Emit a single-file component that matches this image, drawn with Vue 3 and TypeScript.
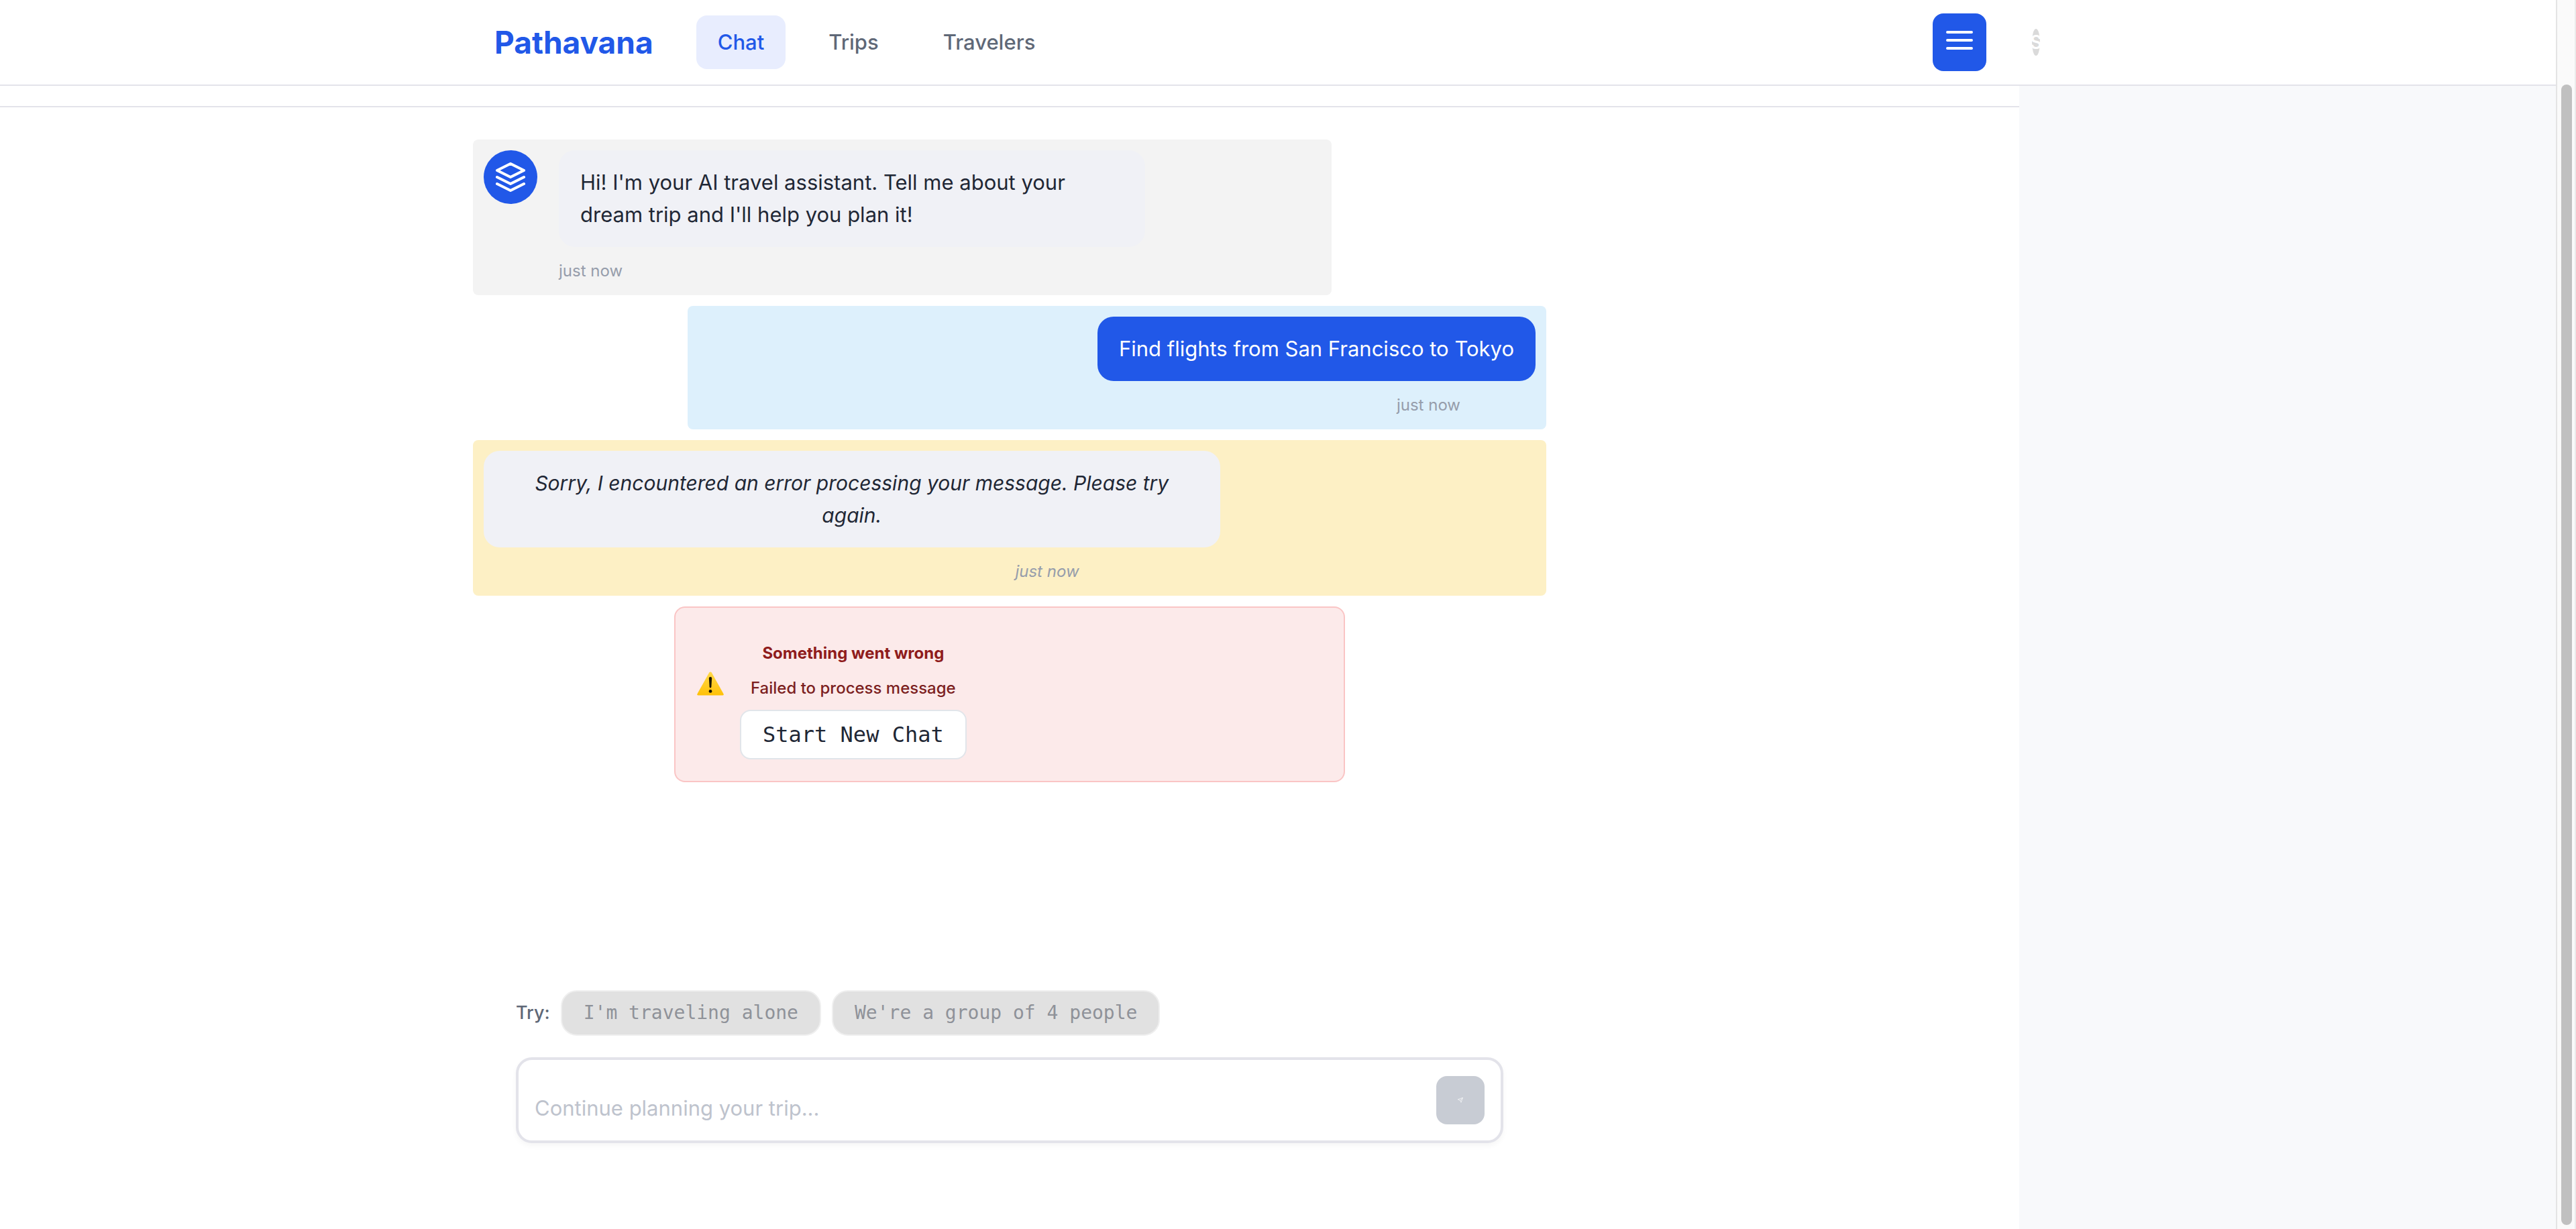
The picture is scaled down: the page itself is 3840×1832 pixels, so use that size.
<script setup lang="ts">
import { ref } from 'vue'

interface NavItem {
  label: string
  active: boolean
}

interface Message {
  id: number
  role: 'assistant' | 'user' | 'system'
  text: string
  time: string
}

const navItems: NavItem[] = [
  { label: 'Chat', active: true },
  { label: 'Trips', active: false },
  { label: 'Travelers', active: false },
]

const messages: Message[] = [
  {
    id: 1,
    role: 'assistant',
    text: "Hi! I'm your AI travel assistant. Tell me about your\ndream trip and I'll help you plan it!",
    time: 'just now',
  },
  { id: 2, role: 'user', text: 'Find flights from San Francisco to Tokyo', time: 'just now' },
  {
    id: 3,
    role: 'system',
    text: 'Sorry, I encountered an error processing your message. Please try\nagain.',
    time: 'just now',
  },
]

const suggestions: string[] = ["I'm traveling alone", "We're a group of 4 people"]
const draft = ref('')
</script>

<template>
  <div class="window">
    <div class="page">
      <header class="topbar">
        <div class="topbar-inner">
          <a class="brand" href="#">Pathavana</a>
          <nav class="nav">
            <a
              v-for="item in navItems"
              :key="item.label"
              href="#"
              class="nav-link"
              :class="{ active: item.active }"
            >{{ item.label }}</a>
          </nav>
          <button class="menu-button" type="button" aria-label="Toggle sidebar">
            <svg viewBox="0 0 24 24" class="icon">
              <path d="M3 6h18M3 12h18M3 18h18" />
            </svg>
          </button>
          <button class="profile" type="button" aria-label="Profile">
            <span class="profile-initial">S</span>
          </button>
        </div>
      </header>

      <div class="body">
        <main class="chat">
          <div class="chat-strip"></div>

          <section class="messages">
            <article v-for="m in messages" :key="m.id" class="message" :class="m.role">
              <div class="message-row">
                <span v-if="m.role === 'assistant'" class="bot">
                  <svg viewBox="0 0 24 24" class="icon">
                    <path d="M12 2 2 7l10 5 10-5-10-5zM2 17l10 5 10-5M2 12l10 5 10-5" />
                  </svg>
                </span>
                <p class="bubble">{{ m.text }}</p>
              </div>
              <time class="time">{{ m.time }}</time>
            </article>

            <div class="error" role="alert">
              <svg class="warning" viewBox="0 0 40 36" aria-hidden="true">
                <defs>
                  <linearGradient id="warn-fill" x1="0" y1="0" x2="0" y2="1">
                    <stop offset="0" stop-color="#ffd84a" />
                    <stop offset="1" stop-color="#ffc107" />
                  </linearGradient>
                </defs>
                <path
                  d="M18.2 1.6Q20-.6 21.8 1.6L39.4 33Q40.4 35.4 38 35.6H2Q-.4 35.4.6 33z"
                  fill="url(#warn-fill)"
                />
                <path d="M17.8 10q0-2 2.2-2t2.2 2l-.8 13q-.2 1.400-1.400 1.400t-1.400-1.400z" fill="#1b1500" />
                <circle cx="20" cy="29.400" r="2.400" fill="#1b1500" />
              </svg>
              <div class="error-body">
                <h4 class="error-title">Something went wrong</h4>
                <p class="error-text">Failed to process message</p>
                <button class="restart" type="button">Start New Chat</button>
              </div>
            </div>
          </section>

          <form class="composer" @submit.prevent>
            <div class="suggestions">
              <span class="try">Try:</span>
              <button v-for="s in suggestions" :key="s" class="chip" type="button" disabled>{{ s }}</button>
            </div>
            <div class="input-box">
              <textarea
                v-model="draft"
                class="input"
                rows="1"
                aria-label="Message"
                placeholder="Continue planning your trip..."
              ></textarea>
              <button class="send" type="submit" aria-label="Send" disabled>
                <svg viewBox="0 0 24 24" class="icon">
                  <path d="M22 2 11 13M22 2l-7 20-4-9-9-4z" />
                </svg>
              </button>
            </div>
          </form>
        </main>
        <aside class="sidebar"></aside>
      </div>
    </div>
    <div class="scrollbar" aria-hidden="true">
      <div class="thumb"></div>
    </div>
  </div>
</template>

<style>
body {
  margin: 0;
  background: #fff;
}
</style>

<style scoped>
.window {
  display: flex;
  min-height: 100vh;
  font-family: Inter, "Liberation Sans", sans-serif;
  font-size: 31px;
  line-height: 48px;
  color: #1f2735;
}

.window *,
.window *::before {
  box-sizing: border-box;
}

.page {
  flex: 1;
  min-width: 0;
  display: flex;
  flex-direction: column;
}

.icon {
  display: block;
  width: 48px;
  height: 48px;
  fill: none;
  stroke: #fff;
  stroke-width: 2;
  stroke-linecap: round;
  stroke-linejoin: round;
}

button {
  margin: 0;
  border: 0;
  font: inherit;
}

.topbar {
  height: 128px;
  border-bottom: 2px solid #e3e3ea;
}

.topbar-inner {
  max-width: 2400px;
  height: 100%;
  margin: 0 auto;
  padding: 0 32px;
  display: flex;
  align-items: center;
}

.brand {
  font-size: 46px;
  font-weight: 700;
  color: #2158e8;
  text-decoration: none;
}

.nav {
  display: flex;
  gap: 32px;
  margin-left: 64px;
}

.nav-link {
  padding: 16px 32px;
  border-radius: 16px;
  font-weight: 500;
  color: #5f6877;
  text-decoration: none;
}

.nav-link.active {
  background: #e8edfe;
  color: #2158e8;
}

.menu-button {
  height: 86px;
  margin-left: auto;
  padding: 16px 16px 22px;
  border-radius: 16px;
  background: #2158e8;
}

.profile {
  margin-left: 36px;
  padding: 0 32px;
  background: none;
}

.profile-initial {
  display: flex;
  align-items: center;
  justify-content: center;
  width: 12px;
  height: 40px;
  border-radius: 50%;
  background: #dadada;
  color: #fff;
  font-size: 28px;
  font-weight: 600;
}

.body {
  flex: 1;
  display: flex;
}

.chat {
  flex: 1;
  min-width: 0;
  display: flex;
  flex-direction: column;
}

.sidebar {
  width: 800px;
  background: #f8f9fb;
}

.chat-strip {
  height: 32px;
  border-bottom: 2px solid #e3e3ea;
}

.messages {
  flex: 1;
  width: 100%;
  max-width: 1600px;
  margin: 0 auto;
  padding: 48px 0;
  display: flex;
  flex-direction: column;
  gap: 16px;
}

.message {
  padding: 16px;
  border-radius: 8px;
}

.message-row {
  display: flex;
  gap: 32px;
}

.bubble {
  max-width: 70%;
  margin: 0;
  padding: 24px 32px;
  border-radius: 24px;
  background: #f0f1f6;
  white-space: pre-line;
}

.time {
  display: block;
  margin: 16px 112px 0;
  font-size: 24px;
  line-height: 40px;
  color: #969dab;
}

.assistant {
  width: 80%;
  background: #f3f3f3;
}

.assistant .bubble,
.system .bubble {
  width: 70%;
}

.bot {
  flex: none;
  width: 80px;
  height: 80px;
  padding: 16px;
  border-radius: 50%;
  background: #2158e8;
}

.user {
  width: 80%;
  align-self: flex-end;
  background: #ddf0fc;
}

.user .message-row {
  justify-content: flex-end;
}

.user .bubble {
  background: #2158e8;
  color: #fff;
}

.user .time {
  text-align: right;
}

.system {
  background: #fdf0c5;
  font-style: italic;
  text-align: center;
}

.system .bubble {
  font-size: 30px;
}

.system .time {
  margin-right: 0;
}

.error {
  width: 1000px;
  max-width: 100%;
  align-self: center;
  display: flex;
  align-items: center;
  gap: 24px;
  padding: 32px;
  border: 2px solid #fac5c5;
  border-radius: 16px;
  background: #fceaea;
  font-size: 24px;
}

.warning {
  flex: none;
  width: 40px;
  height: 36px;
  margin-bottom: 32px;
}

.error-body {
  text-align: center;
}

.error-title {
  margin: 12px 0 4px;
  font-size: 24px;
  font-weight: 700;
  color: #8f1c1c;
}

.error-text {
  margin: 0 0 8px;
  font-weight: 500;
  color: #7c1f1f;
}

.restart {
  display: block;
  padding: 11px 32px;
  border: 2px solid #e1e5ea;
  border-radius: 16px;
  background: #fff;
  color: #1f2735;
  font-family: "DejaVu Sans Mono", monospace;
  font-size: 32px;
  line-height: 48px;
}

.composer {
  width: 100%;
  max-width: 1600px;
  margin: 0 auto;
  padding: 0 64px 128px;
}

.suggestions {
  display: flex;
  align-items: center;
  gap: 16px;
  margin-bottom: 32px;
}

.try {
  font-size: 27px;
  font-weight: 500;
  color: #5f6877;
}

.chip {
  padding: 12px 32px;
  border: 2px solid #efefef;
  border-radius: 24px;
  background: #e1e1e1;
  color: #8f9299;
  font-family: "DejaVu Sans Mono", monospace;
  font-size: 28px;
  line-height: 40px;
}

.input-box {
  display: flex;
  align-items: flex-start;
  gap: 24px;
  padding: 24px;
  border: 4px solid #e3e3ea;
  border-radius: 24px;
  background: #fff;
  box-shadow: 0 4px 8px rgba(0, 0, 0, 0.04);
}

.input {
  flex: 1;
  height: 72px;
  padding: 24px 0 0;
  border: 0;
  outline: 0;
  resize: none;
  overflow: hidden;
  background: transparent;
  color: inherit;
  font: inherit;
}

.input::placeholder {
  color: #bec3cd;
  opacity: 1;
}

.send {
  display: flex;
  align-items: center;
  justify-content: center;
  width: 72px;
  height: 72px;
  padding: 0;
  border-radius: 16px;
  background: #c8ccd4;
}

.send .icon {
  width: 8px;
  height: 8px;
}

.scrollbar {
  flex: none;
  display: flex;
  width: 30px;
  padding: 126px 4px 6px 6px;
  border-left: 2px solid #e4e4e4;
  border-right: 2px solid #ebebeb;
  background: #fafafa;
}

.thumb {
  width: 16px;
  border-radius: 8px;
  background: #c0c0c0;
}
</style>
